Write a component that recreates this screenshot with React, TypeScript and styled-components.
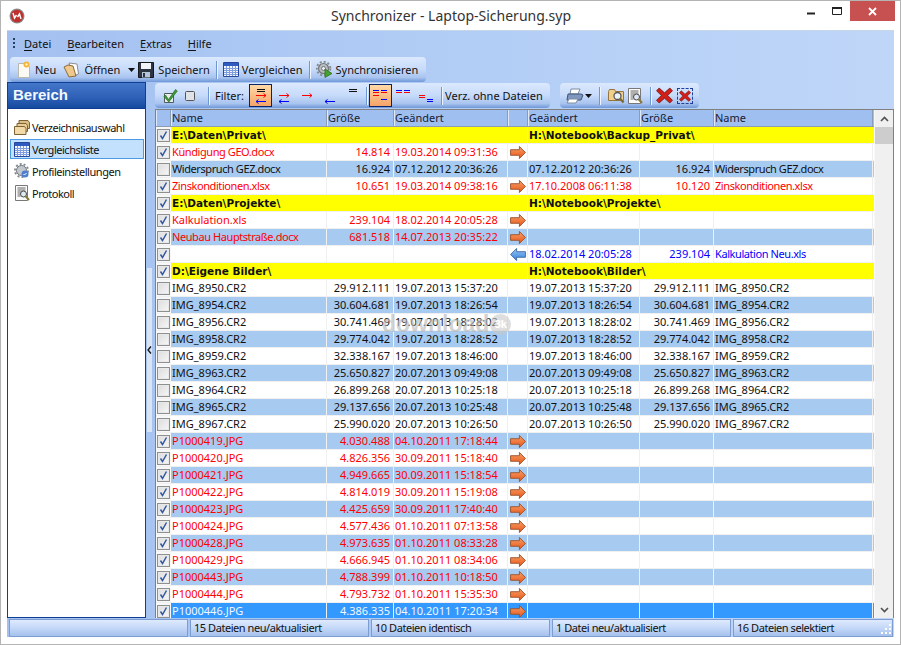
import styled, { createGlobalStyle } from 'styled-components';

const GlobalStyle = createGlobalStyle`
  html, body { margin: 0; padding: 0; background: #fff; }
  * { box-sizing: border-box; }
`;

const uiFont = `'Noto Sans', 'Liberation Sans', sans-serif`;

const Window = styled.div`
  width: 901px;
  height: 645px;
  display: flex;
  flex-direction: column;
  background: #fff;
  border: 1px solid #b4b4b4;
  padding: 0 6px 7px 6px;
  font-family: ${uiFont};
  font-size: 11px;
  color: #111;
  overflow: hidden;
  position: relative;
`;

const TitleBar = styled.div`
  height: 29px;
  flex: none;
  display: flex;
  align-items: flex-start;
  margin: 0 -1px;
`;

const AppLogo = styled.div`
  width: 16px;
  height: 16px;
  margin: 7px 0 0 3px;
  flex: none;
`;

const TitleText = styled.div`
  flex: 1;
  text-align: center;
  font-size: 14px;
  line-height: 29px;
  color: #333;
  padding-left: 79px;
`;

const WindowButton = styled.div<{ $close?: boolean }>`
  width: ${(p) => (p.$close ? '45px' : '26px')};
  height: 20px;
  display: flex;
  align-items: center;
  justify-content: center;
  background: ${(p) => (p.$close ? '#c75050' : 'transparent')};
`;

const Client = styled.div`
  flex: 1;
  display: flex;
  flex-direction: column;
  min-height: 0;
  background: linear-gradient(90deg, #a3c0f0 0%, #b0ccf5 45%, #bfd6f8 100%);
  border-top: 1px solid #c8d6ea;
`;

const MenuBar = styled.div`
  height: 26px;
  flex: none;
  display: flex;
  align-items: center;
  padding: 0 0 2px 6px;
`;

const Grip = styled.span`
  width: 2px;
  height: 10px;
  margin-right: 9px;
  background: repeating-linear-gradient(180deg, #27415f 0 2px, transparent 2px 4px);
`;

const MenuItem = styled.span`
  margin-right: 16px;
  color: #111;
  u { text-underline-offset: 2px; }
`;

const ToolBand = styled.div`
  display: flex;
  align-items: center;
  background: linear-gradient(180deg, #dbe9fd 0%, #c6dafa 50%, #a9c4ef 82%, #6f97d8 100%);
  border-radius: 4px;
`;

const MainToolbar = styled(ToolBand)`
  width: 416px;
  height: 25px;
  flex: none;
  margin-left: 3px;
  padding-left: 7px;
`;

const ToolItem = styled.span<{ $gap?: number; $inner?: number }>`
  display: flex;
  align-items: center;
  gap: ${(p) => p.$inner ?? 4}px;
  margin-right: ${(p) => p.$gap ?? 6}px;
  white-space: nowrap;
  font-size: 11px;
`;

const Separator = styled.span<{ $x?: number }>`
  width: 1px;
  height: 18px;
  flex: none;
  background: #6f97d0;
  box-shadow: 1px 0 0 #eef5ff;
  margin: 0 ${(p) => p.$x ?? 6}px;
`;

const Main = styled.div`
  flex: 1;
  display: flex;
  min-height: 0;
`;

const Sidebar = styled.div`
  width: 139px;
  flex: none;
  display: flex;
  flex-direction: column;
`;

const SidebarHeader = styled.div`
  height: 26px;
  flex: none;
  background: linear-gradient(180deg, #4476c9 0%, #2f62b8 55%, #164a9f 100%);
  border: 1px solid #0f3f94;
  border-bottom: none;
  color: #f4f8ff;
  font: bold 15px 'Liberation Sans', sans-serif;
  line-height: 24px;
  padding-left: 5px;
`;

const SidebarPanel = styled.div`
  flex: 1;
  background: #fff;
  border: 1px solid #0f3f94;
  padding: 8px 1px 0 2px;
  display: flex;
  flex-direction: column;
  gap: 2px;
`;

const SidebarItem = styled.div<{ $active?: boolean }>`
  height: 20px;
  display: flex;
  align-items: center;
  gap: 2px;
  padding-left: 3px;
  border: 1px solid ${(p) => (p.$active ? '#4a9ae6' : 'transparent')};
  background: ${(p) => (p.$active ? '#c3e0fc' : 'transparent')};
  font-size: 11px;
  letter-spacing: -0.47px;
  white-space: nowrap;
`;

const Splitter = styled.div`
  width: 9px;
  flex: none;
  display: flex;
  align-items: center;
  justify-content: flex-start;
`;

const SplitterGrip = styled.div`
  width: 5px;
  height: 164px;
  margin-left: 1px;
  background: #d9e3f2;
  display: flex;
  align-items: center;
  justify-content: center;
`;

const Content = styled.div`
  flex: 1;
  min-width: 0;
  display: flex;
  flex-direction: column;
`;

const ToolRow = styled.div`
  height: 27px;
  flex: none;
  display: flex;
  align-items: flex-start;
  padding-top: 1px;
  gap: 10px;
`;

const FilterToolbar = styled(ToolBand)`
  width: 395px;
  height: 25px;
  padding-left: 7px;
`;

const ActionToolbar = styled(ToolBand)`
  width: 139px;
  height: 25px;
  padding-left: 6px;
`;

const IconSlot = styled.span<{ $width: number }>`
  width: ${(p) => p.$width}px;
  display: flex;
  align-items: center;
  justify-content: center;
  flex: none;
`;

const FilterButton = styled.span<{ $active?: boolean }>`
  width: 23px;
  height: 23px;
  flex: none;
  display: flex;
  align-items: center;
  justify-content: center;
  border: 1px solid ${(p) => (p.$active ? '#0a246a' : 'transparent')};
  background: ${(p) => (p.$active ? 'linear-gradient(180deg, #ffd9a8, #f4a468)' : 'transparent')};
`;

const GridFrame = styled.div`
  flex: 1;
  min-height: 0;
  display: flex;
  border: 1px solid #808080;
  border-bottom: none;
  background: #f0f0f0;
`;

const GridArea = styled.div`
  flex: 1;
  min-width: 0;
  overflow: hidden;
  position: relative;
`;

const columns = '15px 156px 67px 114px 20px 112px 74px 159px';

const HeaderRow = styled.div`
  display: grid;
  grid-template-columns: ${columns};
  height: 17px;
  background: #9fbff0;
  border-bottom: 1px solid #8e9cb2;
`;

const HeaderCell = styled.div`
  padding-left: 1px;
  line-height: 16px;
  color: #182030;
  border-right: 1px solid #8d9cb6;
  box-shadow: inset 1px 0 0 #dfe9f8;
  white-space: nowrap;
`;

type RowKind = 'folder' | 'plain' | 'stripe' | 'selected';

const rowBackground: Record<RowKind, string> = {
  folder: '#ffff00',
  plain: '#ffffff',
  stripe: '#a6caf0',
  selected: '#3399ff',
};

const Row = styled.div<{ $kind: RowKind; $tone: Tone }>`
  display: grid;
  grid-template-columns: ${columns};
  height: 17px;
  background: ${(p) => rowBackground[p.$kind]};
  color: ${(p) =>
    p.$kind === 'selected'
      ? '#f2f8ff'
      : p.$tone === 'red'
        ? '#ff0000'
        : p.$tone === 'blue'
          ? '#0000ff'
          : '#111'};
  border-bottom: 1px solid #f0f0f0;
`;

const CheckCell = styled.div`
  background: #f7f7f7;
  display: flex;
  align-items: center;
  justify-content: center;
`;

const Cell = styled.div<{ $right?: boolean; $bare?: boolean; $bold?: boolean; $tight?: boolean }>`
  padding: 0 ${(p) => (p.$right ? '3px' : '0')} 0 1px;
  line-height: 16px;
  text-align: ${(p) => (p.$right ? 'right' : 'left')};
  white-space: nowrap;
  font-family: ${(p) => (p.$bold ? `'DejaVu Sans', sans-serif` : 'inherit')};
  font-size: ${(p) => (p.$bold ? '10.5px' : '11px')};
  font-weight: ${(p) => (p.$bold ? 700 : 400)};
  letter-spacing: ${(p) => (p.$tight ? '-0.42px' : 'normal')};
  border-right: 1px solid ${(p) => (p.$bare ? 'transparent' : '#f0f0f0')};
`;

const ArrowCell = styled.div`
  display: flex;
  align-items: center;
  justify-content: center;
  border-right: 1px solid #f0f0f0;
`;

const CheckBox = styled.span`
  width: 13px;
  height: 13px;
  border: 1px solid #8e8f8f;
  background: linear-gradient(135deg, #dcdcdc, #f7f7f7);
  box-shadow: inset 0 0 0 1px #e8e8e8;
  display: flex;
  align-items: center;
  justify-content: center;
`;

const ScrollBar = styled.div`
  width: 19px;
  flex: none;
  display: flex;
  flex-direction: column;
  background: #f0f0f0;
  border-left: 1px solid #f8f8f8;
`;

const ScrollButton = styled.div`
  height: 17px;
  flex: none;
  display: flex;
  align-items: center;
  justify-content: center;
`;

const ScrollThumb = styled.div`
  height: 17px;
  flex: none;
  background: #cdcdcd;
`;

const ScrollTrack = styled.div`
  flex: 1;
`;

const Watermark = styled.div`
  position: absolute;
  left: 226px;
  top: 201px;
  display: flex;
  align-items: center;
  gap: 1px;
  font: bold 23px 'Liberation Sans', sans-serif;
  line-height: 26px;
  color: rgba(165, 165, 165, 0.5);
  text-shadow: 0 0 2px rgba(255, 255, 255, 0.35);
  pointer-events: none;
`;

const WatermarkBadge = styled.span`
  width: 21px;
  height: 21px;
  border-radius: 50%;
  background: rgba(200, 200, 200, 0.6);
  color: #fff;
  font-size: 11px;
  display: flex;
  align-items: center;
  justify-content: center;
`;

const StatusBar = styled.div`
  height: 19px;
  flex: none;
  display: grid;
  grid-template-columns: 179px 179px 179px 179px 1fr;
  gap: 2px;
  padding: 1px 1px 0 2px;
  position: relative;
`;

const StatusPanel = styled.div`
  background: linear-gradient(180deg, #dfeafd 0%, #c4d8f9 50%, #a6c1ec 100%);
  border: 1px solid #7d9dd2;
  line-height: 16px;
  padding-left: 3px;
  font-size: 11px;
  letter-spacing: -0.45px;
`;

const SizeGrip = styled.span`
  position: absolute;
  right: 2px;
  bottom: 2px;
  width: 12px;
  height: 12px;
  line-height: 0;
`;

/* icons */

const Logo = () => (
  <svg width="16" height="16" viewBox="0 0 16 16">
    <circle cx="8" cy="8" r="7.5" fill="#8a8a8a" />
    <circle cx="8" cy="8" r="6.3" fill="#c0312d" />
    <path d="M4 5l1.5 5 2-3M12 11l-1.5-5-2 3" fill="none" stroke="#fff" strokeWidth="1.4" />
  </svg>
);

const NewDoc = () => (
  <svg width="14" height="17" viewBox="0 0 14 17">
    <path d="M1.5 2.5h8l3 3v11h-11z" fill="#fbfbf4" stroke="#b9b9b0" />
    <circle cx="9.5" cy="3.5" r="3" fill="#f6b33c" />
    <circle cx="9.5" cy="3.5" r="1.2" fill="#fff2b8" />
  </svg>
);

const OpenFolder = () => (
  <svg width="17" height="17" viewBox="0 0 17 17">
    <path d="M6 2l8 1 1.500 10-5 2z" fill="#fff" stroke="#8f8f8f" />
    <path d="M1 6l4-2 5 1 3 10-7 1z" fill="#eec98b" stroke="#8b6a3b" />
  </svg>
);

const Floppy = () => (
  <svg width="16" height="16" viewBox="0 0 16 16">
    <path d="M.5.5h15v15H.5z" fill="#2d3442" stroke="#15191f" />
    <path d="M3 1h10v6H3z" fill="#f2f4f8" />
    <path d="M4 10h8v5.500H4z" fill="#b8c4d8" />
    <path d="M5 11h2v4H5z" fill="#2d3442" />
  </svg>
);

const TableIcon = () => (
  <svg width="16" height="15" viewBox="0 0 16 15">
    <path d="M.5.5h15v14H.5z" fill="#f6f8ff" stroke="#27479c" />
    <path d="M1 1h14v3H1z" fill="#2e5bc0" />
    <path
      d="M3.500 4v10M6.500 4v10M9.500 4v10M12.500 4v10M1 6.500h14M1 8.500h14M1 10.500h14M1 12.500h14"
      stroke="#7f9ce0"
    />
  </svg>
);

const GearPlay = () => (
  <svg width="17" height="17" viewBox="0 0 17 17">
    <circle cx="7.500" cy="7.500" r="5" fill="#b9bec2" stroke="#6f757a" strokeWidth="1.200" />
    <circle cx="7.500" cy="7.500" r="6.800" fill="none" stroke="#868c92" strokeWidth="2" strokeDasharray="2 2" />
    <circle cx="7.500" cy="7.500" r="2" fill="#eef0f2" stroke="#6f757a" />
    <path d="M9 8l7 4.500L9 16.500z" fill="#46a12e" stroke="#2c7319" strokeWidth=".8" />
  </svg>
);

const BigCheck = () => (
  <svg width="15" height="15" viewBox="0 0 15 15">
    <path d="M1.500 5.500h9v9h-9z" fill="#e8eef0" stroke="#4d5d5d" />
    <path d="M2.500 7l3 4.500 7-10 1.800 1.500-8.500 11L1 8.500z" fill="#3f9a35" stroke="#2a6d26" strokeWidth=".7" />
  </svg>
);

const SmallBox = () => (
  <svg width="10" height="10" viewBox="0 0 10 10">
    <rect x=".5" y=".5" width="9" height="9" rx="1" fill="#dfe3e8" stroke="#555" />
  </svg>
);

const DropArrow = () => (
  <svg width="7" height="4" viewBox="0 0 7 4">
    <path d="M0 0h7L3.500 4z" fill="#111" />
  </svg>
);

const lines = {
  black: '#111',
  red: '#ff0000',
  blue: '#0000ff',
};

type Glyph = 'all' | 'both' | 'right' | 'left' | 'equal';

const FilterArrows = ({ show }: { show: Glyph }) => (
  <svg width="14" height="20" viewBox="0 0 14 20">
    {(show === 'all' || show === 'equal') && (
      <path d="M3 3.500h8M3 5.500h8" stroke={lines.black} />
    )}
    {(show === 'all' || show === 'both' || show === 'right') && (
      <path d="M2 9.500h10M9.500 7.500l2.500 2-2.500 2" stroke={lines.red} fill="none" />
    )}
    {(show === 'all' || show === 'both' || show === 'left') && (
      <path d="M12 15.500H2M4.500 13.500l-2.500 2 2.500 2" stroke={lines.blue} fill="none" />
    )}
  </svg>
);

const FilterEquals = ({ mode }: { mode: 'all' | 'same' | 'diff' }) => (
  <svg width="16" height="20" viewBox="0 0 16 20">
    {mode === 'all' && <path d="M0 6.500h6M0 9.500h6M8 6.500h6" stroke={lines.red} />}
    {mode === 'all' && <path d="M0 4.500h6M8 4.500h6M8 13.500h6" stroke={lines.blue} />}
    {mode === 'same' && <path d="M0 6.500h6M8 6.500h6" stroke={lines.red} />}
    {mode === 'same' && <path d="M0 4.500h6M8 4.500h6" stroke={lines.blue} />}
    {mode === 'diff' && <path d="M0 9.500h6M0 11.500h6" stroke={lines.red} />}
    {mode === 'diff' && <path d="M8 13.500h6M8 15.500h6" stroke={lines.blue} />}
  </svg>
);

const Printer = () => (
  <svg width="18" height="16" viewBox="0 0 18 16">
    <path d="M5 1h9l-2 5H4z" fill="#fff" stroke="#7d8ba0" />
    <path d="M2 6h13l2 1-2 5H1z" fill="#7f97bf" stroke="#3f5478" />
    <path d="M3 11h9l-2 4H1z" fill="#fff" stroke="#7d8ba0" />
  </svg>
);

const FolderSearch = () => (
  <svg width="17" height="16" viewBox="0 0 17 16">
    <path d="M.5 3.500l1-2h5l1 2h8v9H.5z" fill="#efcf8c" stroke="#97753c" />
    <circle cx="9.500" cy="8" r="3.500" fill="#eaf2fa" stroke="#595959" strokeWidth="1.300" />
    <path d="M12 10.500l3.500 4" stroke="#7a6a3a" strokeWidth="2" />
  </svg>
);

const DocSearch = () => (
  <svg width="15" height="16" viewBox="0 0 15 16">
    <path d="M.5.500h12v15H.5z" fill="#fafafa" stroke="#787878" />
    <path d="M2.500 3h8M2.500 5h8M2.500 7h4M2.500 9h3M2.500 11h3" stroke="#666" />
    <circle cx="8.500" cy="9" r="3" fill="#dfeaf4" stroke="#444" />
    <path d="M10.500 11l3.500 4" stroke="#8a7a3a" strokeWidth="2" />
  </svg>
);

const RedCross = ({ size }: { size: number }) => (
  <svg width={size} height={size} viewBox="0 0 16 16">
    <path
      d="M3 1l5 4.500L13 1l2.500 2.500L11 8l4.500 4.500L13 15l-5-4.500L3 15 .5 12.500 5 8 .5 3.500z"
      fill="#cf1f17"
      stroke="#7d1410"
      strokeWidth=".8"
    />
  </svg>
);

const DashedFocus = styled.span`
  width: 16px;
  height: 16px;
  border: 1px dashed #1f3f9c;
  display: flex;
  align-items: center;
  justify-content: center;
`;

const FolderStack = () => (
  <svg width="16" height="15" viewBox="0 0 16 15">
    <path d="M5 .500h9l1.500 2v6H5z" fill="#d9bc86" stroke="#7d6334" />
    <path d="M3 3.500h9l1.500 2v6H3z" fill="#e7cd98" stroke="#7d6334" />
    <path d="M.5 6.500h10l1.500 2v6H.5z" fill="#f1d9a8" stroke="#7d6334" />
  </svg>
);

const GearCheck = () => (
  <svg width="16" height="16" viewBox="0 0 16 16">
    <circle cx="7.500" cy="7.500" r="5" fill="#c2c8cd" stroke="#6f757a" />
    <circle cx="7.500" cy="7.500" r="6.500" fill="none" stroke="#868c92" strokeWidth="2" strokeDasharray="2 2" />
    <circle cx="11" cy="11" r="3.500" fill="#4f7fd0" />
    <path d="M9.500 11l1 1 2-2" stroke="#fff" fill="none" />
  </svg>
);

const Tick = () => (
  <svg width="9" height="10" viewBox="0 0 9 10">
    <path d="M1.500 5.500l2 3L7.500 1.500" fill="none" stroke="#34589f" strokeWidth="1.500" />
  </svg>
);

const RightArrow = () => (
  <svg width="16" height="13" viewBox="0 0 17 14">
    <defs>
      <linearGradient id="orange" x1="0" y1="0" x2="0" y2="1">
        <stop offset="0" stopColor="#f8a267" />
        <stop offset="1" stopColor="#e8541a" />
      </linearGradient>
    </defs>
    <path d="M.5 4h9.500V.5L16.500 7 10 13.500V10H.5z" fill="url(#orange)" stroke="#99522c" />
  </svg>
);

const LeftArrow = () => (
  <svg width="16" height="13" viewBox="0 0 17 14">
    <defs>
      <linearGradient id="blueArrow" x1="0" y1="0" x2="0" y2="1">
        <stop offset="0" stopColor="#9fc8f4" />
        <stop offset="1" stopColor="#2f7fdc" />
      </linearGradient>
    </defs>
    <path d="M16.500 4H7V.5L.5 7 7 13.500V10h9.500z" fill="url(#blueArrow)" stroke="#3a6ca8" />
  </svg>
);

/* data */

type Tone = 'black' | 'red' | 'blue';

interface Entry {
  checked?: boolean;
  folder?: boolean;
  selected?: boolean;
  tight?: boolean;
  tone?: Tone;
  name?: string;
  size?: string;
  date?: string;
  arrow?: 'left' | 'right';
  otherDate?: string;
  otherSize?: string;
  otherName?: string;
}

const same = (name: string, size: string, date: string): Entry => ({
  name,
  size,
  date,
  otherDate: date,
  otherSize: size,
  otherName: name,
});

const copy = (name: string, size: string, date: string, selected?: boolean): Entry => ({
  checked: true,
  tone: 'red',
  arrow: 'right',
  name,
  size,
  date,
  selected,
});

const entries: Entry[] = [
  { checked: true, folder: true, name: 'E:\\Daten\\Privat\\', otherDate: 'H:\\Notebook\\Backup_Privat\\' },
  { ...copy('Kündigung GEO.docx', '14.814', '19.03.2014 09:31:36'), tight: true },
  { ...same('Widerspruch GEZ.docx', '16.924', '07.12.2012 20:36:26'), tight: true },
  {
    ...copy('Zinskonditionen.xlsx', '10.651', '19.03.2014 09:38:16'),
    otherDate: '17.10.2008 06:11:38',
    otherSize: '10.120',
    otherName: 'Zinskonditionen.xlsx',
    tight: true,
  },
  { checked: true, folder: true, name: 'E:\\Daten\\Projekte\\', otherDate: 'H:\\Notebook\\Projekte\\' },
  copy('Kalkulation.xls', '239.104', '18.02.2014 20:05:28'),
  { ...copy('Neubau Hauptstraße.docx', '681.518', '14.07.2013 20:35:22'), tight: true },
  {
    checked: true,
    tone: 'blue',
    arrow: 'left',
    otherDate: '18.02.2014 20:05:28',
    otherSize: '239.104',
    otherName: 'Kalkulation Neu.xls',
    tight: true,
  },
  { checked: true, folder: true, name: 'D:\\Eigene Bilder\\', otherDate: 'H:\\Notebook\\Bilder\\' },
  same('IMG_8950.CR2', '29.912.111', '19.07.2013 15:37:20'),
  same('IMG_8954.CR2', '30.604.681', '19.07.2013 18:26:54'),
  same('IMG_8956.CR2', '30.741.469', '19.07.2013 18:28:02'),
  same('IMG_8958.CR2', '29.774.042', '19.07.2013 18:28:52'),
  same('IMG_8959.CR2', '32.338.167', '19.07.2013 18:46:00'),
  same('IMG_8963.CR2', '25.650.827', '20.07.2013 09:49:08'),
  same('IMG_8964.CR2', '26.899.268', '20.07.2013 10:25:18'),
  same('IMG_8965.CR2', '29.137.656', '20.07.2013 10:25:48'),
  same('IMG_8967.CR2', '25.990.020', '20.07.2013 10:26:50'),
  copy('P1000419.JPG', '4.030.488', '04.10.2011 17:18:44'),
  copy('P1000420.JPG', '4.826.356', '30.09.2011 15:18:40'),
  copy('P1000421.JPG', '4.949.665', '30.09.2011 15:18:54'),
  copy('P1000422.JPG', '4.814.019', '30.09.2011 15:19:08'),
  copy('P1000423.JPG', '4.425.659', '30.09.2011 17:40:40'),
  copy('P1000424.JPG', '4.577.436', '01.10.2011 07:13:58'),
  copy('P1000428.JPG', '4.973.635', '01.10.2011 08:33:28'),
  copy('P1000429.JPG', '4.666.945', '01.10.2011 08:34:06'),
  copy('P1000443.JPG', '4.788.399', '01.10.2011 10:18:50'),
  copy('P1000444.JPG', '4.793.732', '01.10.2011 15:35:30'),
  copy('P1000446.JPG', '4.386.335', '04.10.2011 17:20:34', true),
];

const kindOf = (entry: Entry, index: number): RowKind => {
  if (entry.folder) return 'folder';
  if (entry.selected) return 'selected';
  return index % 2 === 0 ? 'stripe' : 'plain';
};

const headers = ['', 'Name', 'Größe', 'Geändert', '', 'Geändert', 'Größe', 'Name'];

function App() {
  return (
    <>
      <GlobalStyle />
      <Window>
        <TitleBar>
          <AppLogo>
            <Logo />
          </AppLogo>
          <TitleText>Synchronizer - Laptop-Sicherung.syp</TitleText>
          <WindowButton>
            <svg width="8" height="8" viewBox="0 0 8 8">
              <path d="M0 6.500h8" stroke="#222" strokeWidth="2" />
            </svg>
          </WindowButton>
          <WindowButton>
            <svg width="10" height="8" viewBox="0 0 10 8">
              <path d="M.5 1.500h9v6h-9z" fill="none" stroke="#222" />
              <path d="M0 1h10" stroke="#222" strokeWidth="2" />
            </svg>
          </WindowButton>
          <WindowButton $close>
            <svg width="9" height="9" viewBox="0 0 9 9">
              <path d="M1 1l7 7M8 1L1 8" stroke="#fff" strokeWidth="1.800" />
            </svg>
          </WindowButton>
        </TitleBar>
        <Client>
          <MenuBar>
            <Grip />
            <MenuItem><u>D</u>atei</MenuItem>
            <MenuItem><u>B</u>earbeiten</MenuItem>
            <MenuItem><u>E</u>xtras</MenuItem>
            <MenuItem><u>H</u>ilfe</MenuItem>
          </MenuBar>
          <MainToolbar>
            <ToolItem $gap={7}><NewDoc />Neu</ToolItem>
            <ToolItem $gap={8}><OpenFolder />Öffnen</ToolItem>
            <ToolItem $gap={3}><DropArrow /></ToolItem>
            <ToolItem $gap={0}><Floppy />Speichern</ToolItem>
            <Separator />
            <ToolItem $gap={0} $inner={3}><TableIcon />Vergleichen</ToolItem>
            <Separator />
            <ToolItem $gap={0} $inner={3}><GearPlay />Synchronisieren</ToolItem>
          </MainToolbar>
          <Main>
            <Sidebar>
              <SidebarHeader>Bereich</SidebarHeader>
              <SidebarPanel>
                <SidebarItem><FolderStack />Verzeichnisauswahl</SidebarItem>
                <SidebarItem $active><TableIcon />Vergleichsliste</SidebarItem>
                <SidebarItem><GearCheck />Profileinstellungen</SidebarItem>
                <SidebarItem><IconSlot $width={16}><DocSearch /></IconSlot>Protokoll</SidebarItem>
              </SidebarPanel>
            </Sidebar>
            <Splitter>
              <SplitterGrip>
                <svg width="5" height="8" viewBox="0 0 5 8">
                  <path d="M4 .5L1 4l3 3.500" fill="none" stroke="#111" strokeWidth="1.300" />
                </svg>
              </SplitterGrip>
            </Splitter>
            <Content>
              <ToolRow>
                <FilterToolbar>
                  <IconSlot $width={16}><BigCheck /></IconSlot>
                  <IconSlot $width={24}><SmallBox /></IconSlot>
                  <Separator $x={6} />
                  <ToolItem $gap={5}>Filter:</ToolItem>
                  <FilterButton $active><FilterArrows show="all" /></FilterButton>
                  <FilterButton><FilterArrows show="both" /></FilterButton>
                  <FilterButton><FilterArrows show="right" /></FilterButton>
                  <FilterButton><FilterArrows show="left" /></FilterButton>
                  <FilterButton><FilterArrows show="equal" /></FilterButton>
                  <Separator $x={2} />
                  <FilterButton $active><FilterEquals mode="all" /></FilterButton>
                  <FilterButton><FilterEquals mode="same" /></FilterButton>
                  <FilterButton><FilterEquals mode="diff" /></FilterButton>
                  <Separator $x={3} />
                  <ToolItem $gap={0}>Verz. ohne Dateien</ToolItem>
                </FilterToolbar>
                <ActionToolbar>
                  <IconSlot $width={18}><Printer /></IconSlot>
                  <IconSlot $width={8}><DropArrow /></IconSlot>
                  <Separator $x={7} />
                  <IconSlot $width={18}><FolderSearch /></IconSlot>
                  <IconSlot $width={21}><DocSearch /></IconSlot>
                  <Separator $x={4} />
                  <IconSlot $width={18}><RedCross size={17} /></IconSlot>
                  <IconSlot $width={23}>
                    <DashedFocus><RedCross size={12} /></DashedFocus>
                  </IconSlot>
                </ActionToolbar>
              </ToolRow>
              <GridFrame>
                <GridArea>
                  <HeaderRow>
                    {headers.map((label, i) => (
                      <HeaderCell key={i}>{label}</HeaderCell>
                    ))}
                  </HeaderRow>
                  {entries.map((entry, i) => {
                    const folder = !!entry.folder;
                    return (
                      <Row key={i} $kind={kindOf(entry, i)} $tone={entry.tone ?? 'black'}>
                        <CheckCell>
                          <CheckBox>{entry.checked && <Tick />}</CheckBox>
                        </CheckCell>
                        <Cell $bare={folder} $bold={folder} $tight={entry.tight}>{entry.name}</Cell>
                        <Cell $right $bare={folder}>{entry.size}</Cell>
                        <Cell $bare={folder}>{entry.date}</Cell>
                        <ArrowCell>
                          {entry.arrow === 'right' && <RightArrow />}
                          {entry.arrow === 'left' && <LeftArrow />}
                        </ArrowCell>
                        <Cell $bare={folder} $bold={folder}>{entry.otherDate}</Cell>
                        <Cell $right $bare={folder}>{entry.otherSize}</Cell>
                        <Cell $bare={folder} $tight={entry.tight}>{entry.otherName}</Cell>
                      </Row>
                    );
                  })}
                  <Watermark>
                    download<WatermarkBadge>3k</WatermarkBadge>
                  </Watermark>
                </GridArea>
                <ScrollBar>
                  <ScrollButton>
                    <svg width="9" height="6" viewBox="0 0 9 6">
                      <path d="M1 5l3.500-3.500L8 5" fill="none" stroke="#505050" strokeWidth="1.600" />
                    </svg>
                  </ScrollButton>
                  <ScrollThumb />
                  <ScrollTrack />
                  <ScrollButton>
                    <svg width="9" height="6" viewBox="0 0 9 6">
                      <path d="M1 1l3.500 3.500L8 1" fill="none" stroke="#505050" strokeWidth="1.600" />
                    </svg>
                  </ScrollButton>
                </ScrollBar>
              </GridFrame>
            </Content>
          </Main>
          <StatusBar>
            <StatusPanel />
            <StatusPanel>15 Dateien neu/aktualisiert</StatusPanel>
            <StatusPanel>10 Dateien identisch</StatusPanel>
            <StatusPanel>1 Datei neu/aktualisiert</StatusPanel>
            <StatusPanel>16 Dateien selektiert</StatusPanel>
            <SizeGrip>
              <svg width="12" height="12" viewBox="0 0 12 12">
                <path d="M9 1h2v2H9zM5 5h2v2H5zM9 5h2v2H9zM1 9h2v2H1zM5 9h2v2H5zM9 9h2v2H9z" fill="#fff" />
              </svg>
            </SizeGrip>
          </StatusBar>
        </Client>
      </Window>
    </>
  );
}

export default App;
